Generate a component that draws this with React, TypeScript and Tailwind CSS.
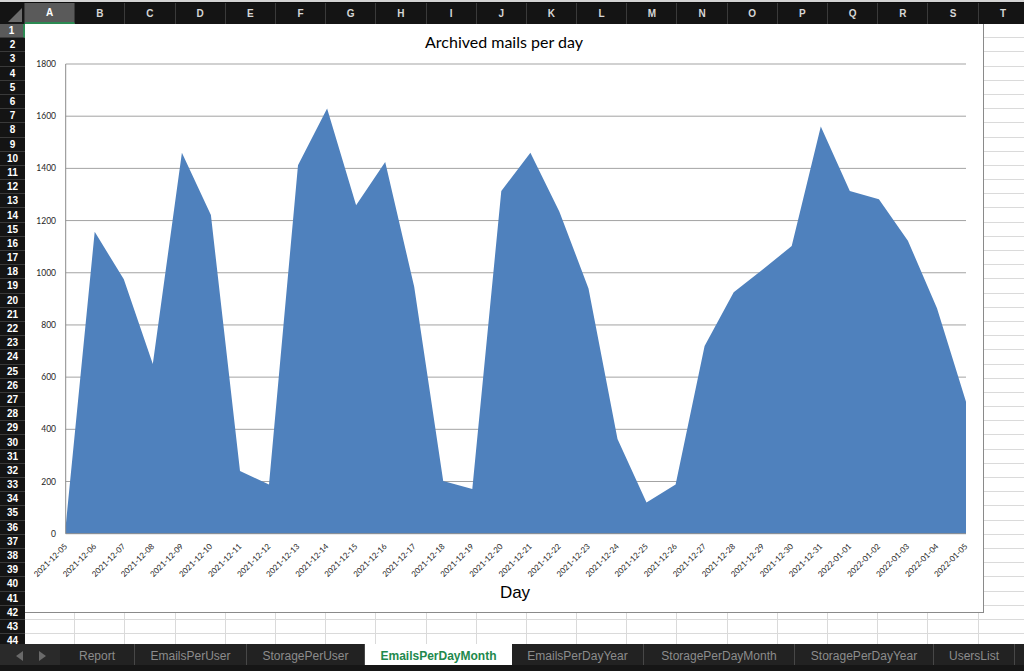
import React from "react";

// Sheet geometry, read off the workbook window.
const COLS = "ABCDEFGHIJKLMNOPQRST".split("");
const ROWS = Array.from({ length: 44 }, (_, i) => i + 1);

// One point per day, 2021-12-05 .. 2022-01-05
const MAILS = [
  30, 1157, 975, 650, 1460, 1221, 240, 189, 1412, 1630, 1259, 1425, 946, 202, 171, 1313, 1460, 1234, 940, 363, 120,
  189, 719, 925, 1013, 1102, 1560, 1313, 1282, 1123, 864, 506,
];

const DAYS = MAILS.map((_, i) => {
  const d = new Date(Date.UTC(2021, 11, 5 + i));
  return d.toISOString().slice(0, 10);
});

const TABS = [
  { label: "Report", w: "w-[75px]" },
  { label: "EmailsPerUser", w: "w-[112px]" },
  { label: "StoragePerUser", w: "w-[118px]" },
  { label: "EmailsPerDayMonth", w: "w-[147px]", active: true },
  { label: "EmailsPerDayYear", w: "w-[132px]" },
  { label: "StoragePerDayMonth", w: "w-[151px]" },
  { label: "StoragePerDayYear", w: "w-[139px]" },
  { label: "UsersList", w: "w-[81px]" },
];

// plot box inside the svg
const X0 = 40.7;
const X1 = 941;
const Y_TOP = 4;
const Y_ZERO = 473.7;
const STEP = (X1 - X0) / (MAILS.length - 1);
const yOf = (v: number) => Y_ZERO - (v / 1800) * (Y_ZERO - Y_TOP);

function AreaChart() {
  const pts = MAILS.map((v, i) => `${(X0 + i * STEP).toFixed(1)},${yOf(v).toFixed(1)}`);
  const area = [`${X0},${Y_ZERO}`, ...pts, `${X1},${Y_ZERO}`].join(" ");
  const ticks = [0, 200, 400, 600, 800, 1000, 1200, 1400, 1600, 1800];

  return (
    <div className="absolute left-0 top-0 flex h-[589px] w-[959px] flex-col border-b border-r border-[#8a8a8a] bg-white">
      <div className="flex h-[36px] items-center justify-center text-[16px] text-black [font-family:Lato,'Liberation_Sans',sans-serif]">
        Archived mails per day
      </div>
      <svg width={958} height={520} viewBox="0 0 958 520" className="block">
        {ticks.map((t) => (
          <g key={t}>
            {t > 0 && <line x1={X0} x2={X1} y1={yOf(t)} y2={yOf(t)} stroke="#a3a3a3" strokeWidth={1} />}
            <text
              x={31}
              y={yOf(t)}
              textAnchor="end"
              dominantBaseline="central"
              fontSize={8.5}
              fill="#262626"
              fontFamily="Lato, 'Liberation Sans', sans-serif"
            >
              {t}
            </text>
          </g>
        ))}
        <polygon points={area} fill="#4f81bd" />
        <line x1={X0} x2={X0} y1={Y_TOP} y2={Y_ZERO} stroke="#8c8c8c" strokeWidth={1} />
        <line x1={X0} x2={X1} y1={Y_ZERO} y2={Y_ZERO} stroke="#8c8c8c" strokeWidth={1} />
        {DAYS.map((d, i) => (
          <text
            key={d}
            transform={`translate(${(X0 + i * STEP + 2).toFixed(1)},487) rotate(-45)`}
            textAnchor="end"
            fontSize={8}
            fill="#262626"
            fontFamily="Lato, 'Liberation Sans', sans-serif"
          >
            {d}
          </text>
        ))}
      </svg>
      <div className="h-[32px] pl-[22px] text-center text-[17px] leading-[26px] text-black [font-family:'Liberation_Sans',Arial,sans-serif]">
        Day
      </div>
    </div>
  );
}

export default function App() {
  return (
    <div className="flex h-[671px] w-[1024px] flex-col overflow-hidden bg-white [font-family:'Liberation_Sans',Arial,sans-serif]">
      {/* window edge */}
      <div className="h-[3px] shrink-0 border-b border-[#0d0d0d] bg-[#d4d4d4]" />

      {/* column headers */}
      <div className="flex h-[21px] shrink-0 bg-[#141414]">
        <div className="w-[25px] shrink-0 border-r border-[#3a3a3a]">
          <svg width={24} height={21} viewBox="0 0 24 21">
            <polygon points="22,5 22,19 8,19" fill="#6b6b6b" />
          </svg>
        </div>
        {COLS.map((c) => (
          <div
            key={c}
            className={`flex w-[50.2px] shrink-0 items-center justify-center border-r border-[#3a3a3a] text-[10px] font-bold ${
              c === "A" ? "border-b-2 border-b-[#2b8a52] bg-[#5a5a5a] text-white" : "text-[#d6d6d6]"
            }`}
          >
            {c}
          </div>
        ))}
      </div>

      {/* sheet body */}
      <div className="flex min-h-0 flex-1 overflow-hidden">
        <div className="flex w-[25px] shrink-0 flex-col bg-[#141414]">
          {ROWS.map((r) => (
            <div
              key={r}
              className={`flex h-[14.2px] shrink-0 items-center justify-center border-b border-[#3a3a3a] text-[10px] font-bold text-white ${
                r === 1 ? "border-r-2 border-r-[#2b8a52] bg-[#5a5a5a]" : ""
              }`}
            >
              {r}
            </div>
          ))}
        </div>
        <div className="relative flex-1">
          {ROWS.map((r) => (
            <div key={r} className="flex h-[14.2px]">
              {COLS.map((c) => (
                <div key={c} className="h-full w-[50.2px] shrink-0 border-b border-r border-[#dadada]" />
              ))}
            </div>
          ))}
          <AreaChart />
        </div>
      </div>

      {/* sheet tabs */}
      <div className="flex h-[27px] shrink-0 flex-col bg-[#222222]">
        <div className="flex h-[21px] items-stretch">
          <div className="flex w-[60px] shrink-0 items-center gap-[14px] bg-[#2a2a2a] pl-[16px] pt-[2px]">
            <svg width={8} height={10} viewBox="0 0 8 10">
              <polygon points="7,0 7,10 0,5" fill="#6a6a6a" />
            </svg>
            <svg width={8} height={10} viewBox="0 0 8 10">
              <polygon points="1,0 1,10 8,5" fill="#6a6a6a" />
            </svg>
          </div>
          {TABS.map((t) =>
            t.active ? (
              <div
                key={t.label}
                className={`${t.w} flex shrink-0 items-center justify-center bg-white pt-[2px] text-[12px] font-bold text-[#22894d]`}
              >
                {t.label}
              </div>
            ) : (
              <div
                key={t.label}
                className={`${t.w} flex shrink-0 items-center justify-center border-r border-[#474747] pt-[2px] text-[12px] text-[#8c8c8c]`}
              >
                {t.label}
              </div>
            ),
          )}
        </div>
        <div className="h-[6px] bg-[#161616]" />
      </div>
    </div>
  );
}
